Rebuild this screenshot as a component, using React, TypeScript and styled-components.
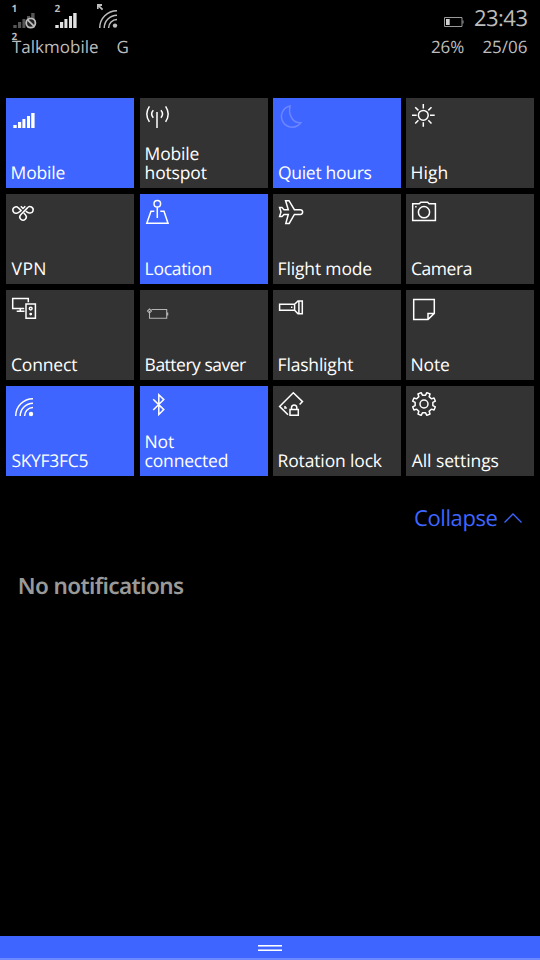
import React from "react";
import styled, { createGlobalStyle } from "styled-components";

const ACCENT = "#3e65ff";
const STATUS = "#bdbdbd";

const GlobalStyle = createGlobalStyle`
  html, body { margin: 0; padding: 0; background: #000; }
  * { box-sizing: border-box; }
`;

const Screen = styled.div`
  width: 540px;
  height: 960px;
  display: flex;
  flex-direction: column;
  overflow: hidden;
  background: #000;
  color: #fff;
  font-family: "Open Sans", "Noto Sans", sans-serif;
  text-rendering: geometricPrecision;
`;

const StatusBar = styled.header`
  height: 98px;
  display: flex;
  justify-content: space-between;
  padding: 3px 12.5px 0 12px;
  color: ${STATUS};
`;

const StatusGroup = styled.div<{ $end?: boolean }>`
  display: flex;
  flex-direction: column;
  gap: 1.5px;
  align-items: ${(p) => (p.$end ? "flex-end" : "flex-start")};
`;

const StatusRow = styled.div<{ $gap: number; $height: number }>`
  display: flex;
  align-items: center;
  gap: ${(p) => p.$gap}px;
  height: ${(p) => p.$height}px;
`;

const StatusText = styled.span`
  font-size: 17px;
  line-height: 24px;
`;

const Clock = styled.span`
  font-size: 22px;
  line-height: 30px;
  letter-spacing: -0.5px;
`;

const BatteryIcon = styled.svg`
  display: block;
  margin-top: 8px;
`;

const Indicator = styled.div<{ $width: number }>`
  position: relative;
  width: ${(p) => p.$width}px;
  height: 30px;
  svg { display: block; }
`;

const SimBadge = styled.span<{ $low?: boolean }>`
  position: absolute;
  left: -0.5px;
  top: ${(p) => (p.$low ? 28 : 0)}px;
  font: 700 10px/10px "Open Sans", sans-serif;
`;

const TileGrid = styled.main`
  display: grid;
  grid-template-columns: 129px repeat(3, 128px);
  grid-auto-rows: 90px;
  column-gap: 5px;
  row-gap: 6px;
  padding: 0 6px;
`;

const Tile = styled.button<{ $on?: boolean }>`
  width: 128px;
  height: 90px;
  display: flex;
  flex-direction: column;
  justify-content: space-between;
  align-items: flex-start;
  padding: 0 0 5px;
  border: 0;
  color: #fff;
  background: ${(p) => (p.$on ? ACCENT : "#333")};
  font: inherit;
  text-align: left;
  text-rendering: inherit;
`;

const TileIcon = styled.svg<{ $tone?: string }>`
  display: block;
  width: 36px;
  height: 36px;
  fill: none;
  stroke: ${(p) => p.$tone ?? "#fff"};
  stroke-width: 1.5;
`;

const TileLabel = styled.span<{ $spacing: number; $inset?: number }>`
  padding-left: ${(p) => p.$inset ?? 4.6}px;
  font-size: 17.5px;
  line-height: 19px;
  letter-spacing: ${(p) => p.$spacing}px;
  white-space: pre-line;
`;

const CollapseRow = styled.div`
  height: 84px;
  display: flex;
  justify-content: flex-end;
  align-items: center;
  padding-right: 18px;
`;

const CollapseButton = styled.button`
  display: flex;
  align-items: center;
  gap: 6.5px;
  padding: 0;
  border: 0;
  background: none;
  color: ${ACCENT};
  font: inherit;
  font-size: 22px;
  line-height: 30px;
  letter-spacing: -0.4px;
  text-rendering: inherit;
`;

const Notifications = styled.section`
  flex: 1;
  padding: 10px 17.7px 0;
`;

const EmptyMessage = styled.p`
  margin: 0;
  color: #999;
  font: 600 22.5px/32px "Noto Sans", sans-serif;
  letter-spacing: -0.6px;
`;

const BottomBar = styled.footer`
  height: 24px;
  display: flex;
  flex-direction: column;
  align-items: center;
  gap: 2px;
  padding-top: 9px;
  background: ${ACCENT};
  border-bottom: 2px solid #6b88ff;
`;

const GripLine = styled.span<{ $flip?: boolean }>`
  width: 24px;
  height: 2px;
  background: linear-gradient(${(p) => (p.$flip ? "to top" : "to bottom")}, #fff 50%, #a9baff 50%);
`;

const gearPath = (() => {
  const pts: string[] = [];
  const steps: [number, number][] = [
    [-12.5, 9], [-8.5, 11.7], [8.5, 11.7], [12.5, 9],
  ];
  for (let i = 0; i < 8; i++) {
    const base = 22.5 + i * 45;
    for (const [d, r] of steps) {
      const a = ((base + d) * Math.PI) / 180;
      pts.push(`${(18 + r * Math.cos(a)).toFixed(2)} ${(18 + r * Math.sin(a)).toFixed(2)}`);
    }
  }
  return `M${pts.join("L")}Z`;
})();

const BARS = "M7.3 27h3.4v3h-3.4zM12 24h3.2v6H12zM16.4 21h3v9h-3zM21 18h3v12h-3zM25.2 15h3.4v15h-3.4z";
const WIFI = "M9.7 30A17.3 17.3 0 0 1 27 12.7M14.2 30A12.8 12.8 0 0 1 27 17.2M18.6 30A8.4 8.4 0 0 1 27 21.6";

const icons: Record<string, React.ReactNode> = {
  signal: <path d={BARS} fill="#fff" stroke="none" />,
  hotspot: (
    <path d="M17 14v16M13.3 12.3Q10 16 13.3 19.8M20.9 12.3Q24.2 16 20.9 19.8M9.4 8.3Q4.2 16 9.4 23.8M25.6 8.3Q30.8 16 25.6 23.8" />
  ),
  moon: <path d="M17 8A10.7 10.7 0 1 0 27.8 24.8Q22 25 19 20.5Q15.5 15 17 8Z" />,
  sun: (
    <path d="M22.2 17.3a4.9 4.9 0 1 1-9.8 0a4.9 4.9 0 1 1 9.8 0M17.3 6v4.5M17.3 24.2v4.5M6 17.3h4.7M24 17.3h4.7M9.2 9.2l3.2 3.2M22.3 22.3l3.2 3.2M9.2 25.5l3.2-3.2M22.3 12.4l3.2-3.2" />
  ),
  vpn: (
    <path d="M14.7 20.7L21.4 13.9A3.2 3.2 0 1 1 23.4 19C21.7 18.7 20.6 17.8 19.8 17.2M12.4 13.9A3.2 3.2 0 1 0 10.8 19.2C12.8 18.8 14 17.2 15.6 16.2M14.7 20.7A3.2 3.2 0 1 0 19.4 20.7L17.8 18.9M12.4 13.9L15.4 16.8M14.8 12.2L17 14.5L19.3 12.2" />
  ),
  location: (
    <path d="M20.6 9.7a3.3 3.3 0 1 1-6.6 0a3.3 3.3 0 1 1 6.6 0M17.3 13v11M14.3 17.3H11L6.8 29.3H28L24 17.3H20.3" />
  ),
  flight: (
    <path d="M6.6 13.6H9L11 15.7H15.3L12.6 6.7H16L21.4 15.7H27.3A2.3 2.3 0 0 1 27.3 20.4H21.4L16.2 29.4H12.8L15.3 20.4H11L9 22.5H6.6L8 18Z" />
  ),
  camera: (
    <>
      <path d="M6.7 9.7H13.3L14.8 8.2H21.6L23.1 9.7H29.4V26.6H6.7Z" />
      <circle cx="18" cy="18.2" r="5.6" />
      <path d="M9.2 12.7h1.4" />
    </>
  ),
  connect: (
    <>
      <path d="M18.2 18.4H6.7V8.5H22.3V12.2M14.3 18.4V21M10.7 21.3h7.8M20 14H29.4V28.2H20Z" />
      <circle cx="24.7" cy="18.6" r="1.4" />
      <circle cx="24.7" cy="24.1" r="0.7" fill="#fff" />
    </>
  ),
  saver: (
    <path strokeWidth="1.1" d="M11.5 19.5H26.7V28.2H9.5V23M27.7 22.5v3M9.5 19l2 2l-2 2l-2-2zM9.5 21v3" />
  ),
  flashlight: (
    <path d="M6.6 14.3H21.6L25 10.9H29.3V23.7H25L21.6 20.2H6.6ZM21.6 14.3V20.2M25.9 10.9V23.7M18 17.3h1.4" />
  ),
  note: <path d="M7.7 9.6H28.3V23.4L22 29.6H7.7ZM22 29.6V23.4H28.3" />,
  wifi: (
    <>
      <path d={WIFI} />
      <circle cx="25" cy="28" r="2.2" fill="#fff" stroke="none" />
    </>
  ),
  bluetooth: <path d="M13.2 13.2L23.8 23.6L18.8 28.5V8.7L23.8 13.6L13.2 24" />,
  rotation: (
    <>
      <path d="M15 28.7L6.6 20.4L20.3 6.7L29.5 15.6L26.6 18.6M12 20v2h1.8" />
      <path d="M17 23.6H25.3V29.3H17ZM18.5 23.6V21.2A2.7 2.7 0 0 1 23.8 21.2V23.6" />
    </>
  ),
  gear: (
    <>
      <path d={gearPath} strokeLinejoin="round" />
      <circle cx="18" cy="18" r="4" />
    </>
  ),
};

interface TileData {
  icon: string;
  label: string;
  on?: boolean;
  tone?: string;
  spacing: number;
  inset?: number;
}

const tiles: TileData[] = [
  { icon: "signal", label: "Mobile", on: true, spacing: -0.18 },
  { icon: "hotspot", label: "Mobile\nhotspot", spacing: -0.17 },
  { icon: "moon", label: "Quiet hours", on: true, tone: "#6b86ff", spacing: -0.3, inset: 5 },
  { icon: "sun", label: "High", spacing: 0 },
  { icon: "vpn", label: "VPN", spacing: 0.4, inset: 5.6 },
  { icon: "location", label: "Location", on: true, spacing: -0.3 },
  { icon: "flight", label: "Flight mode", spacing: -0.16 },
  { icon: "camera", label: "Camera", spacing: -0.45, inset: 5 },
  { icon: "connect", label: "Connect", spacing: -0.18, inset: 5 },
  { icon: "saver", label: "Battery saver", tone: "#b5b5b5", spacing: -0.5 },
  { icon: "flashlight", label: "Flashlight", spacing: -0.19 },
  { icon: "note", label: "Note", spacing: -0.2 },
  { icon: "wifi", label: "SKYF3FC5", on: true, spacing: -0.31, inset: 5.4 },
  { icon: "bluetooth", label: "Not\nconnected", on: true, spacing: -0.2 },
  { icon: "rotation", label: "Rotation lock", spacing: -0.15 },
  { icon: "gear", label: "All settings", spacing: -0.09, inset: 5.8 },
];

export default function App() {
  return (
    <Screen>
      <GlobalStyle />
      <StatusBar>
        <StatusGroup>
          <StatusRow $gap={0} $height={30}>
            <Indicator $width={43}>
              <svg width="30" height="30" viewBox="6 5 30 30">
                <path d={BARS} fill="#555" />
                <circle cx="24.8" cy="25" r="4.6" fill="#222" stroke={STATUS} strokeWidth="1.8" />
                <path d="M21.6 21.8l6.4 6.4" stroke={STATUS} strokeWidth="1.8" />
              </svg>
              <SimBadge>1</SimBadge>
              <SimBadge $low>2</SimBadge>
            </Indicator>
            <Indicator $width={42}>
              <svg width="30" height="30" viewBox="7 5 30 30">
                <path d={BARS} fill="#e2e2e2" />
              </svg>
              <SimBadge>2</SimBadge>
            </Indicator>
            <Indicator $width={24}>
              <svg width="24" height="30" viewBox="7 5 24 30" fill="none" stroke={STATUS} strokeWidth="1.5">
                <path d={WIFI} />
                <circle cx="25" cy="27.6" r="2.2" fill={STATUS} stroke="none" />
                <path d="M7.7 11V7H12M7.9 7.2L12.6 11.6" strokeWidth="1.8" />
              </svg>
            </Indicator>
          </StatusRow>
          <StatusRow $gap={18} $height={24}>
            <StatusText>Talkmobile</StatusText>
            <StatusText>G</StatusText>
          </StatusRow>
        </StatusGroup>
        <StatusGroup $end>
          <StatusRow $gap={10} $height={30}>
            <BatteryIcon width="20" height="12" viewBox="0 0 20 12">
              <path d="M.5 1.5h17.5v9H.5zM19 4.5v3" fill="none" stroke="#999" />
              <path d="M2 3h3.7v6H2z" fill="#d0d0d0" />
            </BatteryIcon>
            <Clock>23:43</Clock>
          </StatusRow>
          <StatusRow $gap={18} $height={24}>
            <StatusText>26%</StatusText>
            <StatusText>25/06</StatusText>
          </StatusRow>
        </StatusGroup>
      </StatusBar>

      <TileGrid>
        {tiles.map((t) => (
          <Tile key={t.icon} $on={t.on}>
            <TileIcon viewBox="0 0 36 36" $tone={t.tone}>
              {icons[t.icon]}
            </TileIcon>
            <TileLabel $spacing={t.spacing} $inset={t.inset}>{t.label}</TileLabel>
          </Tile>
        ))}
      </TileGrid>

      <CollapseRow>
        <CollapseButton>
          Collapse
          <svg width="18" height="10" viewBox="0 0 18 10" fill="none" stroke="currentColor" strokeWidth="1.3">
            <path d="M.5 9.5L9 1L17.5 9.5" />
          </svg>
        </CollapseButton>
      </CollapseRow>

      <Notifications>
        <EmptyMessage>No notifications</EmptyMessage>
      </Notifications>

      <BottomBar>
        <GripLine />
        <GripLine $flip />
      </BottomBar>
    </Screen>
  );
}
